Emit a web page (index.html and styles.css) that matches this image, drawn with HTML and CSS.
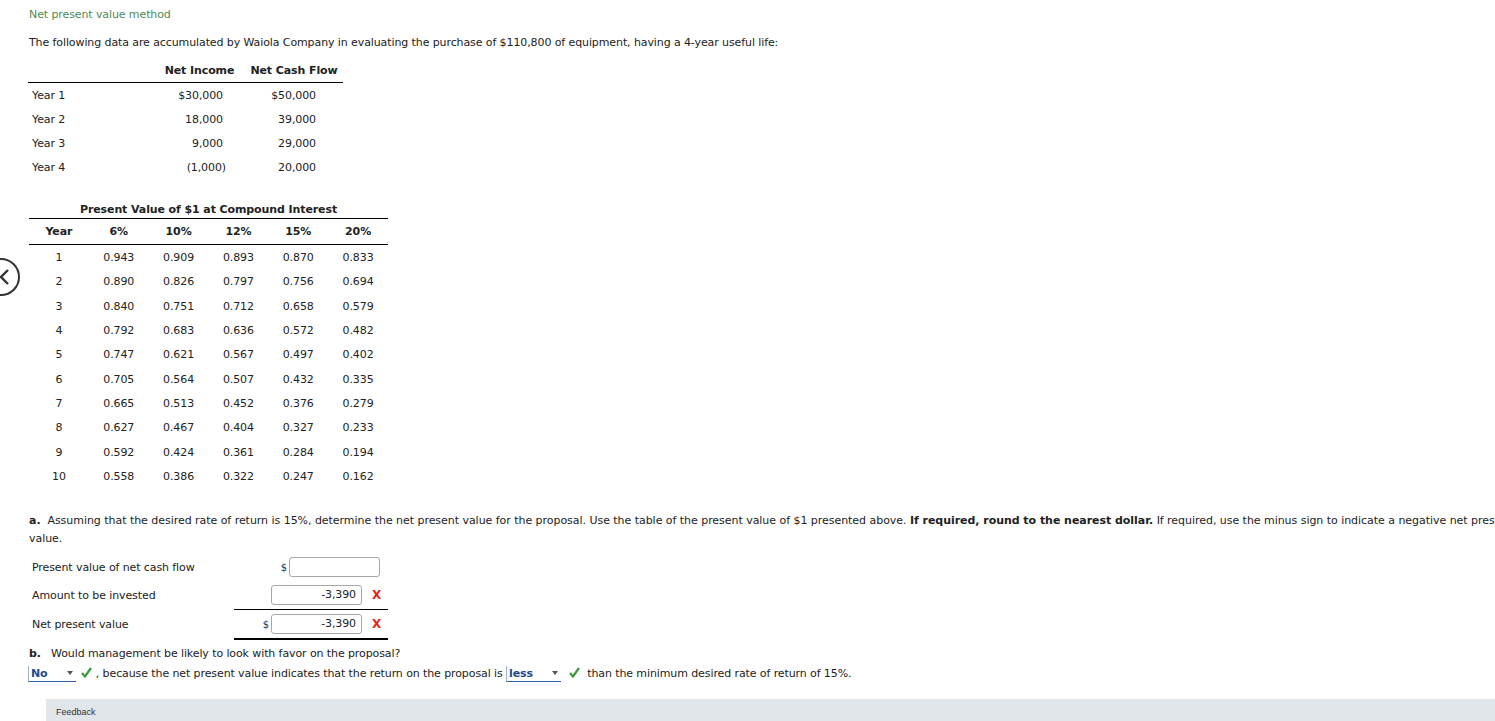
FILE: index.html
```html
<!DOCTYPE html>
<html lang="en">
<head>
  <meta charset="UTF-8" />
  <title>Net present value method</title>
  <link rel="stylesheet" href="styles.css">
</head>
<body>

  <!-- Previous question button (half off screen) -->
  <button class="nav-prev" aria-label="Previous">
    <svg width="22" height="40" viewBox="0 0 22 40">
      <circle cx="1" cy="20" r="18" fill="#fff" stroke="#333" stroke-width="2"/>
      <polyline points="8,13 1,20 8,27" fill="none" stroke="#333" stroke-width="2.4"/>
    </svg>
  </button>

  <main class="page">
    <p class="title">Net present value method</p>
    <p class="intro">The following data are accumulated by Waiola Company in evaluating the purchase of $110,800 of equipment, having a 4-year useful life:</p>

    <!-- Income / cash flow table -->
    <table class="flow-table">
      <colgroup>
        <col class="col-label">
        <col class="col-income">
        <col class="col-cash">
      </colgroup>
      <thead>
        <tr>
          <th></th>
          <th>Net Income</th>
          <th>Net Cash Flow</th>
        </tr>
      </thead>
      <tbody>
        <tr><td>Year 1</td><td class="num">$30,000</td><td class="num cash">$50,000</td></tr>
        <tr><td>Year 2</td><td class="num">18,000</td><td class="num cash">39,000</td></tr>
        <tr><td>Year 3</td><td class="num">9,000</td><td class="num cash">29,000</td></tr>
        <tr><td>Year 4</td><td class="num neg">(1,000)</td><td class="num cash">20,000</td></tr>
      </tbody>
    </table>

    <!-- Present value table -->
    <table class="pv-table">
      <thead>
        <tr class="pv-caption"><th colspan="6">Present Value of $1 at Compound Interest</th></tr>
        <tr class="pv-head">
          <th>Year</th><th>6%</th><th>10%</th><th>12%</th><th>15%</th><th>20%</th>
        </tr>
      </thead>
      <tbody>
        <tr><td>1</td><td>0.943</td><td>0.909</td><td>0.893</td><td>0.870</td><td>0.833</td></tr>
        <tr><td>2</td><td>0.890</td><td>0.826</td><td>0.797</td><td>0.756</td><td>0.694</td></tr>
        <tr><td>3</td><td>0.840</td><td>0.751</td><td>0.712</td><td>0.658</td><td>0.579</td></tr>
        <tr><td>4</td><td>0.792</td><td>0.683</td><td>0.636</td><td>0.572</td><td>0.482</td></tr>
        <tr><td>5</td><td>0.747</td><td>0.621</td><td>0.567</td><td>0.497</td><td>0.402</td></tr>
        <tr><td>6</td><td>0.705</td><td>0.564</td><td>0.507</td><td>0.432</td><td>0.335</td></tr>
        <tr><td>7</td><td>0.665</td><td>0.513</td><td>0.452</td><td>0.376</td><td>0.279</td></tr>
        <tr><td>8</td><td>0.627</td><td>0.467</td><td>0.404</td><td>0.327</td><td>0.233</td></tr>
        <tr><td>9</td><td>0.592</td><td>0.424</td><td>0.361</td><td>0.284</td><td>0.194</td></tr>
        <tr><td>10</td><td>0.558</td><td>0.386</td><td>0.322</td><td>0.247</td><td>0.162</td></tr>
      </tbody>
    </table>

    <!-- Part a -->
    <p class="question"><b>a.</b>&nbsp; Assuming that the desired rate of return is 15%, determine the net present value for the proposal. Use the table of the present value of $1 presented above. <b>If required, round to the nearest dollar.</b> If required, use the minus sign to indicate a negative net present value.</p>

    <div class="npv-grid">
      <div class="npv-label">Present value of net cash flow</div>
      <div class="npv-amount first">
        <span class="dollar">$</span>
        <span class="answer-box"></span>
      </div>

      <div class="npv-label">Amount to be invested</div>
      <div class="npv-amount">
        <span class="answer-box">-3,390</span>
        <span class="wrong">X</span>
      </div>

      <div class="npv-label">Net present value</div>
      <div class="npv-amount total">
        <span class="dollar">$</span>
        <span class="answer-box">-3,390</span>
        <span class="wrong">X</span>
      </div>
    </div>

    <!-- Part b -->
    <div class="part-b">
      <p><b>b.</b>&nbsp;&nbsp; Would management be likely to look with favor on the proposal?</p>
      <p class="answer-line">
        <span class="pick pick-no">No</span>
        <svg class="check" width="11" height="11" viewBox="0 0 11 11"><polyline points="1,6 4,9.5 10,1" fill="none" stroke="#3c9a3c" stroke-width="2.2"/></svg>
        , because the net present value indicates that the return on the proposal is
        <span class="pick pick-less">less</span>
        <svg class="check check-late" width="11" height="11" viewBox="0 0 11 11"><polyline points="1,6 4,9.5 10,1" fill="none" stroke="#3c9a3c" stroke-width="2.2"/></svg>
        &nbsp;than the minimum desired rate of return of 15%.
      </p>
    </div>

    <div class="feedback">Feedback</div>
  </main>

</body>
</html>
```

FILE: styles.css
```css
* {
  box-sizing: border-box;
}

html,
body {
  overflow: hidden;
}

body {
  margin: 0;
  font-family: "DejaVu Sans", Verdana, sans-serif;
  font-size: 11px;
  letter-spacing: -0.1px;
  color: #222;
  background: #fff;
}

p {
  margin: 0;
}

/* Previous button */
.nav-prev {
  position: absolute;
  left: 0;
  top: 257px;
  padding: 0;
  border: none;
  background: transparent;
  line-height: 0;
}

.page {
  width: 1530px;
  padding-left: 29px;
}

.title {
  padding-top: 7px;
  line-height: 16px;
  color: #4f8a55;
}

.intro {
  margin-top: 12px;
  line-height: 16px;
}

/* Income / cash flow table */
.flow-table {
  margin: 8px 0 0 -1px;
  border-collapse: separate;
  border-spacing: 0;
  width: 315px;
  table-layout: fixed;
}

.col-label { width: 122px; }
.col-income { width: 95px; }
.col-cash { width: 98px; }

.flow-table th {
  height: 24px;
  font-weight: bold;
  text-align: center;
  border-bottom: 1px solid #000;
  padding: 0;
}

.flow-table th:nth-child(2) {
  padding-left: 4px;
}

.flow-table td {
  height: 24px;
  padding: 0 0 0 4px;
}

.flow-table .num {
  text-align: right;
  padding-right: 22px;
}

.flow-table .neg {
  padding-right: 19px;
}

.flow-table .cash {
  padding-right: 27px;
}

/* Present value table */
.pv-table {
  margin-top: 22px;
  width: 359px;
  border-collapse: separate;
  border-spacing: 0;
  table-layout: fixed;
}

.pv-table th,
.pv-table td {
  padding: 0;
  text-align: center;
}

.pv-table th:first-child,
.pv-table td:first-child {
  width: 54px;
}

.pv-caption th {
  height: 18px;
  border-bottom: 1px solid #000;
  font-weight: bold;
}

.pv-head th {
  height: 26px;
  border-bottom: 1px solid #000;
  font-weight: bold;
}

.pv-table td {
  height: 24.33px;
  padding-top: 1px;
}

/* Part a */
.question {
  margin-top: 24px;
  line-height: 18px;
  letter-spacing: -0.04px;
}

.npv-grid {
  margin-top: 5px;
  display: grid;
  grid-template-columns: 205px 154px;
  grid-template-rows: 28px 28px 31px;
  align-items: stretch;
}

.npv-label {
  display: flex;
  align-items: center;
  padding-left: 3px;
}

.npv-amount {
  display: flex;
  align-items: center;
  justify-content: flex-end;
  padding-right: 7px;
}

.npv-amount.first {
  padding-right: 8px;
}

.npv-amount.total {
  border-top: 1px solid #000;
  border-bottom: 2px solid #000;
}

.dollar {
  font-size: 10px;
  margin-right: 2px;
  color: #333;
}

.answer-box {
  display: inline-block;
  width: 91px;
  height: 20px;
  line-height: 18px;
  border: 1px solid #a8a8a8;
  border-radius: 3px;
  text-align: right;
  padding-right: 5px;
  color: #222;
}

.wrong {
  margin-left: 10px;
  width: 9px;
  color: #e2231a;
  font-weight: bold;
  font-size: 12px;
}

/* Part b */
.part-b {
  margin-top: 4px;
}

.part-b p {
  line-height: 20px;
}

.answer-line {
  margin-left: -1px;
}

.pick {
  position: relative;
  display: inline-block;
  height: 16px;
  line-height: 15px;
  padding-left: 2px;
  font-weight: bold;
  color: #1c4a8c;
  border-left: 1px solid #9bb3cf;
  border-bottom: 1px solid #2f5f9e;
  vertical-align: baseline;
}

.pick::after {
  content: "";
  position: absolute;
  right: 3px;
  top: 5px;
  border-left: 3px solid transparent;
  border-right: 3px solid transparent;
  border-top: 4px solid #555;
}

.pick-no {
  width: 48px;
}

.pick-less {
  width: 55px;
}

.check {
  margin: 0 0 0 2px;
  vertical-align: -1px;
}

.check-late {
  margin-left: 5px;
}

.feedback {
  margin: 15px 0 0 17px;
  height: 40px;
  padding: 8px 10px;
  background: #e0e6e9;
  font-family: "Liberation Sans", Arial, sans-serif;
  font-size: 9px;
  letter-spacing: 0;
  color: #333;
}
```
